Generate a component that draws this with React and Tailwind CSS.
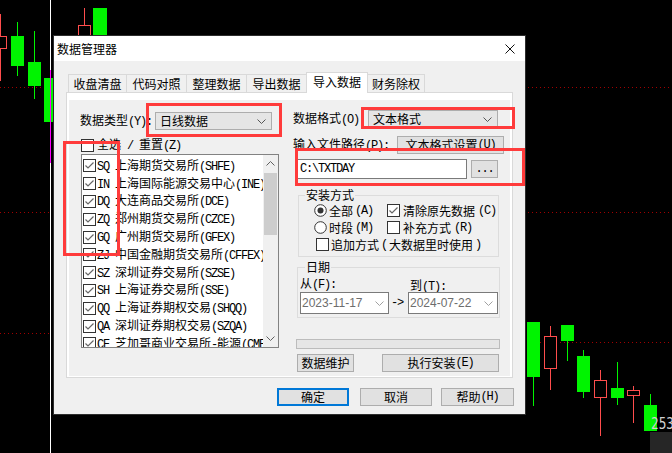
import React from 'react';

const mono = "font-['Liberation_Mono'] tracking-[-1.2px]";

// ASCII runs get a half-width mono face so they line up like SimSun
function Tx({ t }) {
  return t
    .split(/([ -~]+)/)
    .filter(Boolean)
    .map((p, i) =>
      /^[ -~]+$/.test(p) ? (
        <span key={i} className={mono}>{p}</span>
      ) : (
        <span key={i}>{p}</span>
      )
    );
}

function Check({ on }) {
  return (
    <svg width="13" height="13" viewBox="0 0 13 13" className="shrink-0">
      <rect x="0.5" y="0.5" width="12" height="12" fill="#fff" stroke="#333" />
      {on && <path d="M2.5 6.5 L5 9 L10.5 3.5" fill="none" stroke="#666" strokeWidth="1.2" />}
    </svg>
  );
}

function Radio({ on }) {
  return (
    <svg width="13" height="13" viewBox="0 0 13 13" className="shrink-0">
      <circle cx="6.5" cy="6.5" r="5.8" fill="#fff" stroke="#333" />
      {on && <circle cx="6.5" cy="6.5" r="3" fill="#333" />}
    </svg>
  );
}

function Chev({ c = '#555', up }) {
  return (
    <svg width="9" height="5" viewBox="0 0 9 5" className="shrink-0">
      <path d={up ? 'M0.5 4.5 L4.5 0.5 L8.5 4.5' : 'M0.5 0.5 L4.5 4.5 L8.5 0.5'} fill="none" stroke={c} />
    </svg>
  );
}

function Btn({ children, className }) {
  return (
    <div className={`flex h-[18px] items-center justify-center border border-[#adadad] bg-[#e1e1e1] ${className}`}>
      {children}
    </div>
  );
}

const exchanges = [
  'SQ 上海期货交易所(SHFE)',
  'IN 上海国际能源交易中心(INE)',
  'DQ 大连商品交易所(DCE)',
  'ZQ 郑州期货交易所(CZCE)',
  'GQ 广州期货交易所(GFEX)',
  'ZJ 中国金融期货交易所(CFFEX)',
  'SZ 深圳证券交易所(SZSE)',
  'SH 上海证券交易所(SSE)',
  'QQ 上海证券期权交易(SHQQ)',
  'QA 深圳证券期权交易(SZQA)',
  'CE 芝加哥商业交易所-能源(CME)',
];

const tabs = [
  { name: '收盘清盘', w: 'w-[58px]' },
  { name: '代码对照', w: 'w-[60px]' },
  { name: '整理数据', w: 'w-[60px]' },
  { name: '导出数据', w: 'w-[60px]' },
  { name: '导入数据', w: 'w-[62px]', on: true },
  { name: '财务除权', w: 'w-[57px]' },
];

const G = '#00f400';
const R = '#ff4d4d';
const greens = [
  [11, 13, 36, 66, 17.5, 22, 76],
  [28, 13, 62, 86, 34.5, 31, 99],
  [44, 13, 78, 122, 0, 0, 0],
  [93, 14, 8, 40, 0, 0, 0],
  [527, 13, 322, 377, 533.5, 377, 406],
  [561, 13, 325, 341, 567.5, 341, 361],
  [577, 13, 356, 392, 583.5, 350, 398],
  [611, 13, 388, 398, 617.5, 362, 405],
  [644, 13, 405, 431, 650.5, 394, 405],
];
const reds = [
  [-6, 13, 36, 49, 0.5, 14, 81],
  [78, 13, 25, 40, 84.5, 8, 25],
  [544, 13, 336, 369, 550.5, 326, 390],
  [594, 13, 380, 398, 600.5, 370, 436],
  [627, 13, 390, 396, 633.5, 386, 423],
];

function Chart() {
  const D = '#a00000';
  return (
    <svg className="absolute inset-0" width="672" height="453" shapeRendering="crispEdges">
      <line x1="0" y1="87.5" x2="50" y2="87.5" stroke={D} strokeDasharray="1 3" />
      <line x1="0" y1="212.5" x2="50" y2="212.5" stroke={D} strokeDasharray="1 3" />
      <line x1="0" y1="333.5" x2="50" y2="333.5" stroke={D} strokeDasharray="1 3" />
      <line x1="528" y1="87.5" x2="672" y2="87.5" stroke={D} strokeDasharray="1 3" />
      <line x1="528" y1="212.5" x2="672" y2="212.5" stroke={D} strokeDasharray="1 3" />
      <line x1="528" y1="342.5" x2="672" y2="342.5" stroke={D} strokeDasharray="1 3" />
      {greens.map(([x, w, t, b, wx, w1, w2], i) => (
        <g key={i}>
          {wx > 0 && <line x1={wx} y1={w1} x2={wx} y2={w2} stroke={G} />}
          <rect x={x} y={t} width={w} height={b - t} fill={G} />
        </g>
      ))}
      {reds.map(([x, w, t, b, wx, w1, w2], i) => (
        <g key={i}>
          <line x1={wx} y1={w1} x2={wx} y2={w2} stroke={R} />
          <rect x={x + 0.5} y={t + 0.5} width={w - 1} height={b - t - 1} fill="#000" stroke={R} />
        </g>
      ))}
      <rect x="50" y="0" width="1" height="453" fill="#fff" />
      <rect x="50" y="70" width="1" height="93" fill="#ff00ff" />
      <rect x="650" y="432" width="22" height="21" fill="#262626" />
      <text x="651" y="429" fontSize="15" fill="#d0d0d0" fontFamily="DejaVu Sans Mono" textLength="23" lengthAdjust="spacingAndGlyphs">
        253
      </text>
    </svg>
  );
}

function ImportPanel() {
  return (
    <div className="flex h-full bg-[#f0f0f0] pl-[11px]">
      {/* left column */}
      <div className="flex w-[200px] flex-col">
        <div className="mt-[12px] flex h-[18px] items-center">
          <span className="w-[75px]"><Tx t="数据类型(Y):" /></span>
          <div className="flex h-[18px] w-[117px] items-center justify-between border border-[#adadad] bg-[#e5e5e5] pl-[4px] pr-[5px]">
            <span>日线数据</span>
            <Chev />
          </div>
        </div>
        <div className="mt-[8px] flex h-[14px] items-center gap-[3px] pl-[1px]">
          <Check />
          <span><Tx t="全选 / 重置(Z)" /></span>
        </div>
        <div className="ml-[1px] mt-[2px] flex h-[194px] w-[198px] border border-[#828282] bg-white">
          <div className="flex-1 overflow-hidden pl-[1px] pt-[2px]">
            {exchanges.map((e) => (
              <div key={e} className="flex h-[17.8px] items-center gap-[1px] whitespace-nowrap">
                <Check on />
                <span><Tx t={e} /></span>
              </div>
            ))}
          </div>
          <div className="flex w-[15px] flex-col bg-[#f0f0f0]">
            <div className="flex h-[17px] items-center justify-center"><Chev c="#606060" up /></div>
            <div className="mx-[1px] mt-[1px] h-[62px] bg-[#cdcdcd]" />
            <div className="flex-1" />
            <div className="flex h-[17px] items-center justify-center"><Chev c="#606060" /></div>
          </div>
        </div>
      </div>

      {/* right column */}
      <div className="ml-[13px] flex flex-1 flex-col">
        <div className="mt-[10px] flex h-[18px] items-center">
          <span className="w-[75px]"><Tx t="数据格式(O)" /></span>
          <div className="flex h-[18px] w-[130px] items-center justify-between border border-[#adadad] bg-[#e5e5e5] pl-[4px] pr-[5px]">
            <span>文本格式</span>
            <Chev />
          </div>
        </div>
        <div className="mt-[8px] flex h-[18px] items-center">
          <span className="w-[104px] whitespace-nowrap"><Tx t="输入文件路径(P):" /></span>
          <Btn className="w-[107px]"><Tx t="文本格式设置(U)" /></Btn>
        </div>
        <div className="mt-[5px] flex h-[20px] items-center">
          <div className="ml-[3px] flex h-[20px] w-[171px] items-center border border-[#7a7a7a] bg-white pl-[3px]">
            <Tx t="C:\TXTDAY" />
          </div>
          <Btn className="ml-[4px] h-[17px] w-[27px]"><span className={mono}>...</span></Btn>
        </div>

        <fieldset className="ml-[5px] mt-[9px] w-[201px] border border-[#dcdcdc] pb-[3px]">
          <legend className="ml-[6px] px-[1px] leading-[14px]">安装方式</legend>
          <div className="flex h-[17px] items-center pl-[15px]">
            <div className="flex w-[73px] items-center gap-[2px]"><Radio on /><Tx t="全部(A)" /></div>
            <div className="flex items-center gap-[3px]"><Check on /><Tx t="清除原先数据(C)" /></div>
          </div>
          <div className="flex h-[17px] items-center pl-[15px]">
            <div className="flex w-[73px] items-center gap-[2px]"><Radio /><Tx t="时段(M)" /></div>
            <div className="flex items-center gap-[3px]"><Check /><Tx t="补充方式(R)" /></div>
          </div>
          <div className="flex h-[17px] items-center gap-[2px] whitespace-nowrap pl-[17px]">
            <Check /><Tx t="追加方式(大数据里时使用)" />
          </div>
        </fieldset>

        <fieldset className="ml-[4px] mt-[3px] w-[203px] border border-[#dcdcdc] pb-[3px]">
          <legend className="ml-[7px] px-[1px] leading-[14px]">日期</legend>
          <div className="flex h-[18px] pl-[2px]">
            <span className="w-[110px] pt-[2px]"><Tx t="从(F):" /></span>
            <span className="pt-[4px]"><Tx t="到(T):" /></span>
          </div>
          <div className="flex h-[22px] items-center pl-[2px] font-['Liberation_Sans'] text-[#6d6d6d]">
            <div className="flex h-[22px] w-[89px] items-center justify-between border border-[#7a7a7a] bg-white pl-[1px] pr-[4px]">
              <span>2023-11-17</span><Chev c="#a0a0a0" />
            </div>
            <span className={`w-[19px] pl-[2px] text-black ${mono}`}>-&gt;</span>
            <div className="flex h-[22px] w-[90px] items-center justify-between border border-[#7a7a7a] bg-white pl-[1px] pr-[4px]">
              <span>2024-07-22</span><Chev c="#a0a0a0" />
            </div>
          </div>
        </fieldset>

        <div className="ml-[3px] mt-[21px] h-[10px] w-[204px] border border-[#bcbcbc] bg-[#e6e6e6]" />
        <div className="mt-[5px] flex">
          <Btn className="ml-[4px] w-[57px]">数据维护</Btn>
          <Btn className="ml-[28px] w-[117px]"><Tx t="执行安装(E)" /></Btn>
        </div>
      </div>
    </div>
  );
}

export default function App() {
  return (
    <div className="relative h-[453px] w-[672px] overflow-hidden bg-black font-['Noto_Sans_CJK_SC',sans-serif] text-[12px] leading-[14px] text-black">
      <Chart />

      <div className="absolute left-[53px] top-[35px] flex h-[380px] w-[473px] flex-col border border-[#2d2d2d] bg-[#f0f0f0]">
        <div className="flex h-[25px] shrink-0 items-center justify-between bg-white pl-[3px] pr-[10px]">
          <span>数据管理器</span>
          <svg width="10" height="10" viewBox="0 0 10 10">
            <path d="M0.5 0.5 L9.5 9.5 M9.5 0.5 L0.5 9.5" stroke="#111" strokeWidth="1" />
          </svg>
        </div>

        <div className="flex flex-1 flex-col px-[12px] pt-[11px]">
          <div className="ml-[2px] flex h-[20px] items-end">
            {tabs.map((t, i) => {
              const afterOn = i > 0 && tabs[i - 1].on;
              const last = i === tabs.length - 1;
              return t.on ? (
                <div key={t.name} className={`relative z-10 -mb-px flex h-[21px] ${t.w} items-center justify-center border-l border-r border-t border-[#d9d9d9] bg-white pb-[2px]`}>
                  {t.name}
                </div>
              ) : (
                <div key={t.name} className={`flex h-[18px] ${t.w} items-center justify-center border-t border-[#d9d9d9] ${afterOn ? '' : 'border-l'} ${last ? 'border-r' : ''}`}>
                  {t.name}
                </div>
              );
            })}
          </div>
          <div className="h-[286px] border border-[#d9d9d9] bg-white px-[2px] pb-[1px] pt-[7px]">
            <ImportPanel />
          </div>
          <div className="-mr-px mt-[10px] flex justify-end">
            <div className="flex h-[18px] w-[72px] items-center justify-center border-2 border-[#0078d7] bg-[#e1e1e1]">确定</div>
            <Btn className="ml-[11px] w-[72px]">取消</Btn>
            <Btn className="ml-[9px] w-[73px]"><Tx t="帮助(H)" /></Btn>
          </div>
        </div>
      </div>

      {/* red annotation boxes */}
      <div className="absolute left-[146px] top-[103px] h-[34px] w-[136px] border-[3px] border-[#ff3b3b]" />
      <div className="absolute left-[361px] top-[107px] h-[22px] w-[154px] border-[3px] border-[#ff3b3b]" />
      <div className="absolute left-[295px] top-[148px] h-[38px] w-[230px] border-[3px] border-[#ff3b3b]" />
      <div className="absolute left-[63px] top-[141px] h-[115px] w-[57px] border-[3px] border-[#ff3b3b]" />
    </div>
  );
}
